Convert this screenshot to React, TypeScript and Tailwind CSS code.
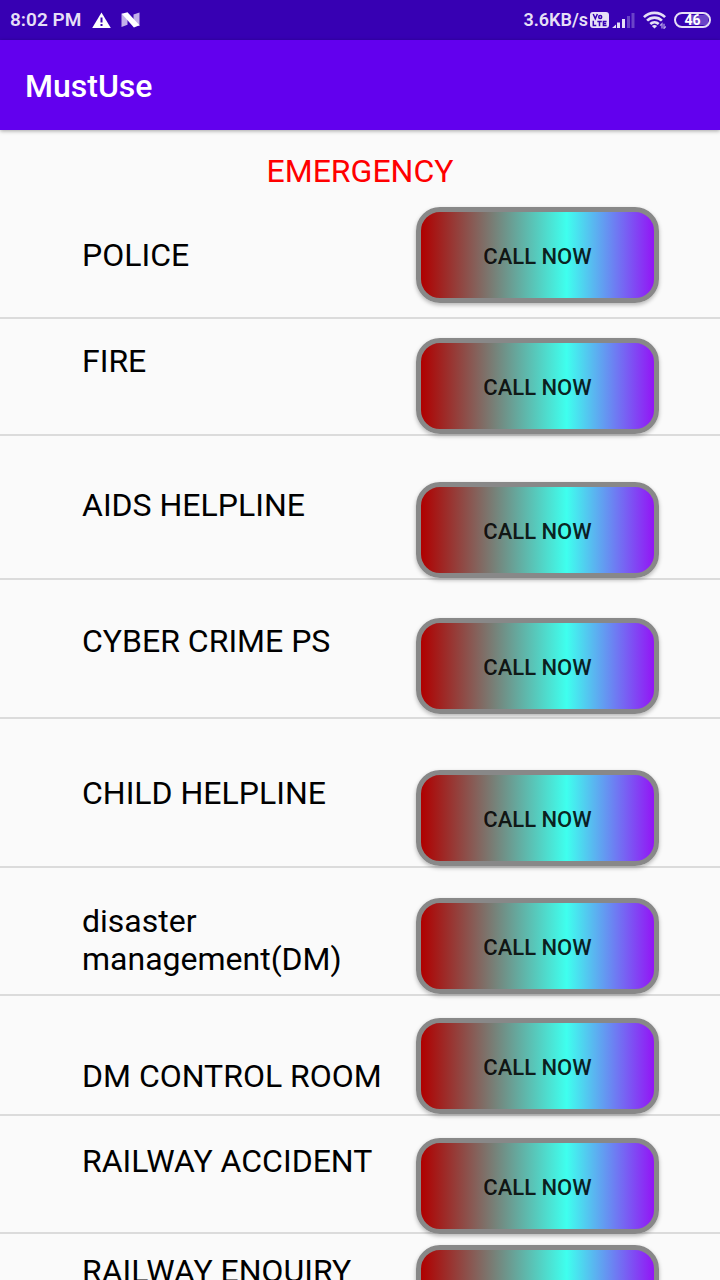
type Contact = { name: string; row: string; label: string };

const contacts: Contact[] = [
  { name: "POLICE", row: "pt-[17px] pb-[14px]", label: "pt-[29px]" },
  { name: "FIRE", row: "pt-[19px]", label: "pt-1" },
  { name: "AIDS HELPLINE", row: "pt-[46px]", label: "pt-1" },
  { name: "CYBER CRIME PS", row: "pt-[38px] pb-[3px]", label: "pt-1" },
  { name: "CHILD HELPLINE", row: "pt-[51px]", label: "pt-1" },
  { name: "disaster management(DM)", row: "pt-[30px]", label: "pt-1" },
  { name: "DM CONTROL ROOM", row: "pt-[22px]", label: "pt-[39px]" },
  { name: "RAILWAY ACCIDENT", row: "pt-[22px] [&>button]:-mb-[2px]", label: "pt-1" },
  { name: "RAILWAY ENQUIRY", row: "pt-[11px] pb-[14px]", label: "pt-[7px]" },
];

function WarningIcon() {
  return (
    <svg className="h-[16px] w-[19px]" viewBox="0 0 19 16" aria-hidden="true">
      <path d="M9.500.5 18.800 16H.2Z" fill="#fff" />
      <path d="M8.500 5.500h2v5h-2zM8.500 12h2v2h-2z" fill="#3700b3" />
    </svg>
  );
}

function NIcon() {
  return (
    <svg className="h-[16px] w-[19px]" viewBox="0 0 19 16" aria-hidden="true">
      <path d="M.5 1.500v13.500l6-2.200V3ZM18.500.5v13.500l-6-1.700V2.500Z" fill="#c3b0ea" />
      <path d="M.8 1.800 6.500.2 18.500 13.200l-5.600 2.300Z" fill="#fff" />
    </svg>
  );
}

function VolteIcon() {
  return (
    <svg className="h-[16px] w-[19px]" viewBox="0 0 19 16" role="img" aria-label="VoLTE">
      <rect width="19" height="16" rx="3" fill="#e6dff6" />
      <g fill="none" stroke="#3700b3" strokeWidth="1.500">
        <path d="m3.200 2 2.100 4.600L7.400 2M3.300 8.800v4.700h3M7.300 9.400h4.500M9.500 9.400V14.200M16.600 9.400h-3.200v4.100h3.200M13.400 11.400h2.800" />
        <circle cx="10.200" cy="5" r="1.500" />
      </g>
    </svg>
  );
}

function SignalIcon() {
  return (
    <svg className="h-[16px] w-[23px]" viewBox="0 0 23 16" aria-hidden="true">
      <path d="M0 16 4 12.500V16ZM5 10.500h3V16H5ZM10 7h3v9h-3Z" fill="#e6dff6" />
      <path d="M15 4h3v12h-3ZM19.500 1h3v15h-3Z" fill="#6a43c8" />
    </svg>
  );
}

function WifiIcon() {
  return (
    <svg className="h-[18px] w-[23px]" viewBox="0 0 23 18" aria-hidden="true">
      <g fill="none" stroke="#e6dff6" strokeWidth="2.600">
        <path d="M.9 6.200C6.400.4 16.600.4 22.100 6.200" />
        <path d="M4.100 9.700c4-4.100 10.800-4.100 14.800 0" />
        <path d="M7.300 13c2.400-2.200 6-2.200 8.400 0" />
      </g>
      <path d="m8.900 15 2.600 2.400L14.100 15c-1.500-1.300-3.700-1.300-5.200 0Z" fill="#e6dff6" />
      <path d="M19 17.500v-4.800l-2 2M21 12.700v4.800l2-2" fill="none" stroke="#b8a4e6" strokeWidth="1.200" />
    </svg>
  );
}

function StatusBar() {
  return (
    <div className="flex h-10 shrink-0 items-center justify-between bg-[#3700b3] pr-[9px] pl-[10px] text-[18px] leading-5 font-semibold text-[#e6dff6]">
      <div className="flex items-center">
        <span className="text-[19px]">8:02 PM</span>
        <span className="ml-[11px] flex gap-[10px]">
          <WarningIcon />
          <NIcon />
        </span>
      </div>
      <div className="flex items-center">
        <span>3.6KB/s</span>
        <span className="ml-[2px] flex items-center">
          <VolteIcon />
          <span className="ml-[3px] flex">
            <SignalIcon />
          </span>
          <span className="ml-[8px] flex">
            <WifiIcon />
          </span>
        </span>
        <span className="ml-2 flex h-4 w-[37px] items-center justify-center rounded-full border-2 border-[#e6dff6] bg-linear-to-r from-transparent from-45% to-[#6a43c8] to-45% bg-size-[30px_10px] bg-center bg-no-repeat text-[14px] leading-3 font-bold text-white">
          46
        </span>
      </div>
    </div>
  );
}

function CallButton({ name }: { name: string }) {
  return (
    <button
      type="button"
      aria-label={`CALL NOW ${name}`}
      className="relative z-10 h-24 w-[243px] shrink-0 rounded-[24px] border-5 border-[#888888] bg-[linear-gradient(90deg,#b00000,#3fffee_62.5%,#9315f5)] bg-origin-padding pt-1 text-[22px] leading-[26px] font-medium text-black/87 shadow-[0_2px_4px_rgba(0,0,0,0.28)]"
    >
      CALL NOW
    </button>
  );
}

export default function App() {
  return (
    <div className="flex h-screen flex-col overflow-hidden bg-[#fafafa] font-[Roboto,sans-serif] text-black">
      <StatusBar />
      <header className="relative z-20 flex h-[90px] shrink-0 items-center bg-[#6200ee] px-[25px] pt-[2px] shadow-[0_1px_4px_rgba(0,0,0,0.35)]">
        <h1 className="text-[32px] leading-10 font-medium text-white">MustUse</h1>
      </header>
      <main className="min-h-0 flex-1 overflow-y-auto [scrollbar-width:none]">
        <h2 className="pt-[22px] text-center text-[32px] leading-[38px] text-[#ff0000]">EMERGENCY</h2>
        <ul>
          {contacts.map((contact) => (
            <li
              key={contact.name}
              className={`flex items-start justify-between border-b-2 border-[#dbdbdb] pr-[61px] pl-[82px] ${contact.row}`}
            >
              <span className={`min-w-0 flex-1 text-[32px] leading-[38px] ${contact.label}`}>{contact.name}</span>
              <CallButton name={contact.name} />
            </li>
          ))}
        </ul>
      </main>
    </div>
  );
}
